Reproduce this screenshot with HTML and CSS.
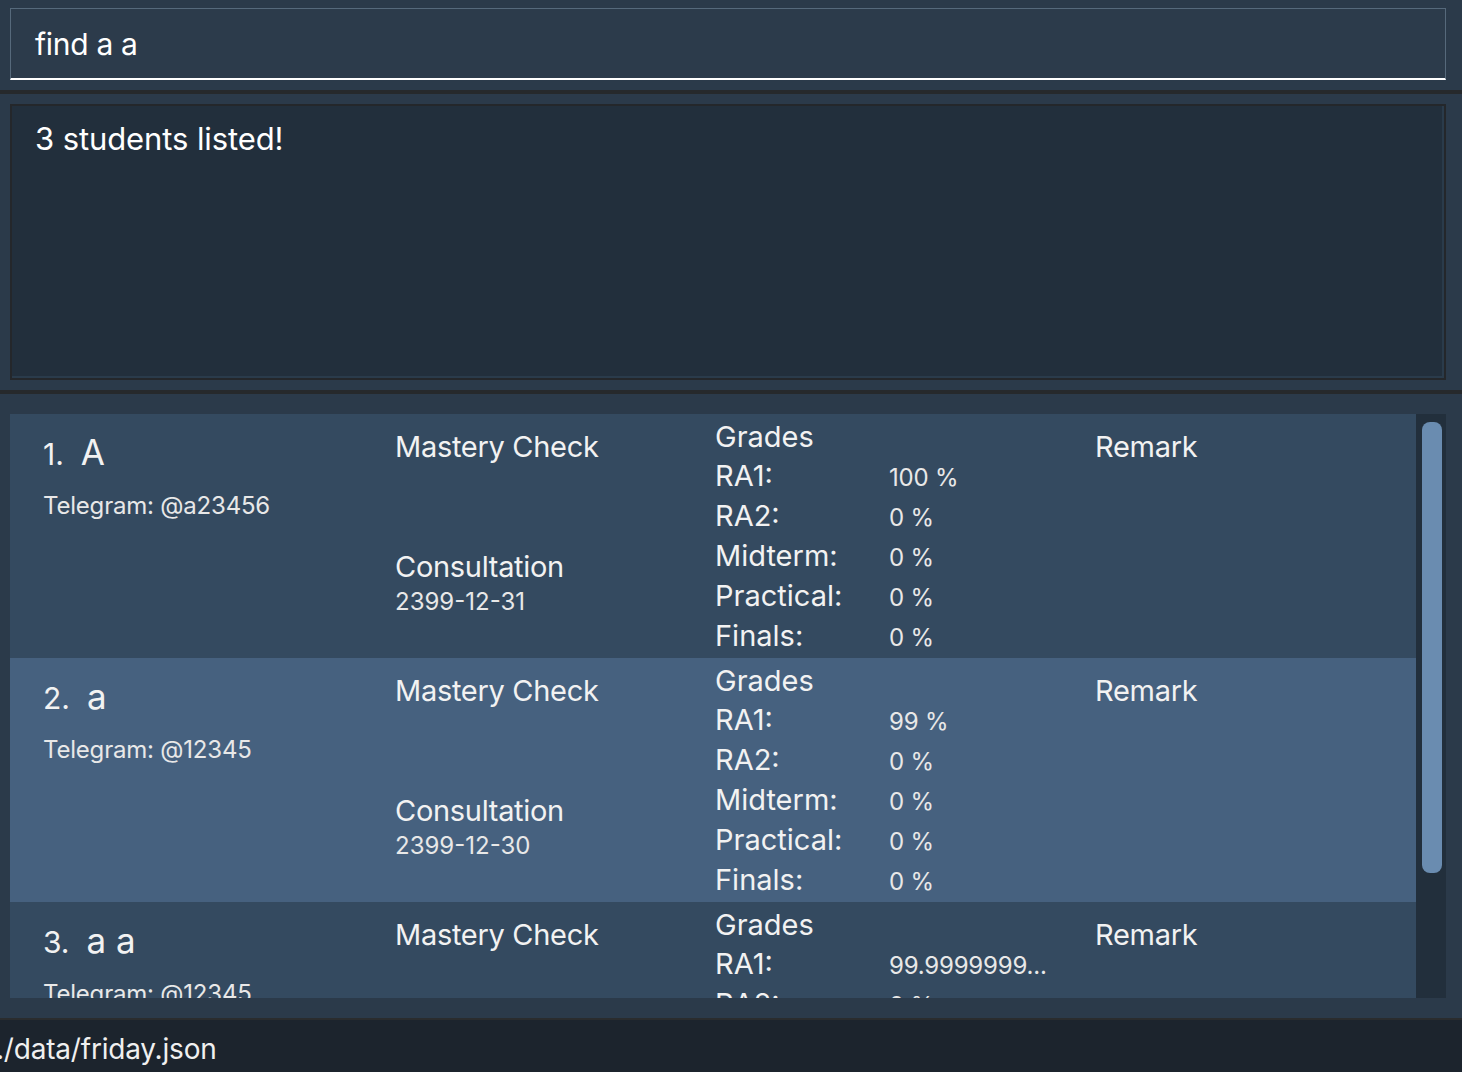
FILE: index.html
```html
<!DOCTYPE html>
<html>
<head>
<meta charset="utf-8">
<link rel="stylesheet" href="styles.css">
</head>
<body>
<div class="app">
  <section class="command-area">
    <div class="command-box">find a a</div>
  </section>
  <div class="sep"></div>
  <section class="result-area">
    <div class="result-box">3 students listed!</div>
  </section>
  <div class="sep"></div>
  <section class="list-area">
    <div class="list">
      <div class="cards">
        <div class="card odd">
          <div class="col-name">
            <div class="name"><span class="idx">1.</span><span class="nm">A</span></div>
            <div class="tele">Telegram: @a23456</div>
          </div>
          <div class="col-mc">
            <div class="head">Mastery Check</div>
            <div class="head consult">Consultation</div>
            <div class="date">2399-12-31</div>
          </div>
          <div class="col-grades">
            <div class="g-title">Grades</div>
            <div class="g-row"><span class="g-lbl">RA1:</span><span class="g-val">100 %</span></div>
            <div class="g-row"><span class="g-lbl">RA2:</span><span class="g-val">0 %</span></div>
            <div class="g-row"><span class="g-lbl">Midterm:</span><span class="g-val">0 %</span></div>
            <div class="g-row"><span class="g-lbl">Practical:</span><span class="g-val">0 %</span></div>
            <div class="g-row"><span class="g-lbl">Finals:</span><span class="g-val">0 %</span></div>
          </div>
          <div class="col-remark"><div class="head">Remark</div></div>
        </div>
        <div class="card even">
          <div class="col-name">
            <div class="name"><span class="idx">2.</span><span class="nm">a</span></div>
            <div class="tele">Telegram: @12345</div>
          </div>
          <div class="col-mc">
            <div class="head">Mastery Check</div>
            <div class="head consult">Consultation</div>
            <div class="date">2399-12-30</div>
          </div>
          <div class="col-grades">
            <div class="g-title">Grades</div>
            <div class="g-row"><span class="g-lbl">RA1:</span><span class="g-val">99 %</span></div>
            <div class="g-row"><span class="g-lbl">RA2:</span><span class="g-val">0 %</span></div>
            <div class="g-row"><span class="g-lbl">Midterm:</span><span class="g-val">0 %</span></div>
            <div class="g-row"><span class="g-lbl">Practical:</span><span class="g-val">0 %</span></div>
            <div class="g-row"><span class="g-lbl">Finals:</span><span class="g-val">0 %</span></div>
          </div>
          <div class="col-remark"><div class="head">Remark</div></div>
        </div>
        <div class="card odd">
          <div class="col-name">
            <div class="name"><span class="idx">3.</span><span class="nm">a a</span></div>
            <div class="tele">Telegram: @12345</div>
          </div>
          <div class="col-mc">
            <div class="head">Mastery Check</div>
            <div class="head consult">Consultation</div>
            <div class="date">2399-12-29</div>
          </div>
          <div class="col-grades">
            <div class="g-title">Grades</div>
            <div class="g-row"><span class="g-lbl">RA1:</span><span class="g-val">99.9999999...</span></div>
            <div class="g-row"><span class="g-lbl">RA2:</span><span class="g-val">0 %</span></div>
            <div class="g-row"><span class="g-lbl">Midterm:</span><span class="g-val">0 %</span></div>
            <div class="g-row"><span class="g-lbl">Practical:</span><span class="g-val">0 %</span></div>
            <div class="g-row"><span class="g-lbl">Finals:</span><span class="g-val">0 %</span></div>
          </div>
          <div class="col-remark"><div class="head">Remark</div></div>
        </div>
      </div>
      <div class="scrollbar"><div class="thumb"></div></div>
    </div>
  </section>
  <footer class="status">./data/friday.json</footer>
</div>
</body>
</html>
```

FILE: styles.css
```css
html, body {
  margin: 0;
  padding: 0;
  height: 100%;
}
body {
  background: #2b3a4a;
  font-family: Inter, "Open Sans", sans-serif;
  color: #f2f2f2;
  overflow: hidden;
}
.app {
  display: flex;
  flex-direction: column;
  height: 1072px;
}
.command-area {
  padding: 8px 16px 10px 10px;
}
.command-box {
  height: 72px;
  box-sizing: border-box;
  background: #2c3b4b;
  border: 1px solid #56697b;
  border-bottom: 2px solid #ffffff;
  padding-left: 24px;
  font-size: 30px;
  line-height: 70px;
  color: #ffffff;
  letter-spacing: -0.3px;
}
.sep {
  height: 4px;
  background: #26292c;
}
.result-area {
  padding: 10px 16px 10px 10px;
}
.result-box {
  height: 276px;
  box-sizing: border-box;
  background: #222f3c;
  border: 2px solid #24272b;
  box-shadow: inset -2px -2px 0 #2a3b4b;
  padding: 10px 0 0 23px;
  font-size: 31px;
  line-height: 46px;
  letter-spacing: -0.1px;
  color: #ffffff;
}
.list-area {
  padding: 20px 16px 20px 10px;
}
.list {
  display: flex;
  height: 584px;
  overflow: hidden;
}
.cards {
  flex: 1;
  overflow: hidden;
}
.card {
  height: 244px;
  box-sizing: border-box;
  display: grid;
  grid-template-columns: 352px 320px 380px 1fr;
  padding: 3px 0 0 33px;
  overflow: hidden;
}
.card.odd { background: #344a60; }
.card.even { background: #46617f; }
.col-name { padding-top: 14px; }
.name {
  display: flex;
  align-items: baseline;
  height: 42px;
  line-height: 42px;
  color: #f2f2f2;
}
.idx {
  font-size: 30px;
  margin-right: 17px;
}
.nm {
  font-size: 35px;
}
.tele {
  margin-top: 17px;
  font-size: 24px;
  line-height: 32px;
  letter-spacing: -0.2px;
  color: #e8e8e8;
}
.col-mc { padding-top: 10px; }
.head {
  font-size: 29px;
  line-height: 40px;
  letter-spacing: -0.3px;
  color: #f2f2f2;
}
.consult { margin-top: 80px; }
.date {
  font-size: 24px;
  line-height: 32px;
  margin-top: -1px;
  color: #e8e8e8;
}
.col-remark { padding-top: 10px; }
.g-title, .g-row {
  font-size: 29px;
  height: 40px;
  line-height: 40px;
  color: #f2f2f2;
}
.g-title { height: 39px; }
.g-row { display: flex; align-items: baseline; overflow: visible; }
.g-lbl { width: 174px; flex: none; }
.g-val { font-size: 24px; color: #e8e8e8; white-space: nowrap; letter-spacing: -0.2px; }
.scrollbar {
  width: 30px;
  background: #222f3c;
  padding: 8px 4px 0 6px;
  box-sizing: border-box;
}
.thumb {
  height: 451px;
  background: #6a8cb0;
  border-radius: 8px;
}
.status {
  height: 54px;
  box-sizing: border-box;
  border-top: 2px solid #2a2c2e;
  background: #1c242d;
  font-size: 28px;
  line-height: 58px;
  text-indent: -4px;
  letter-spacing: -0.2px;
  color: #f0f0f0;
}
```
